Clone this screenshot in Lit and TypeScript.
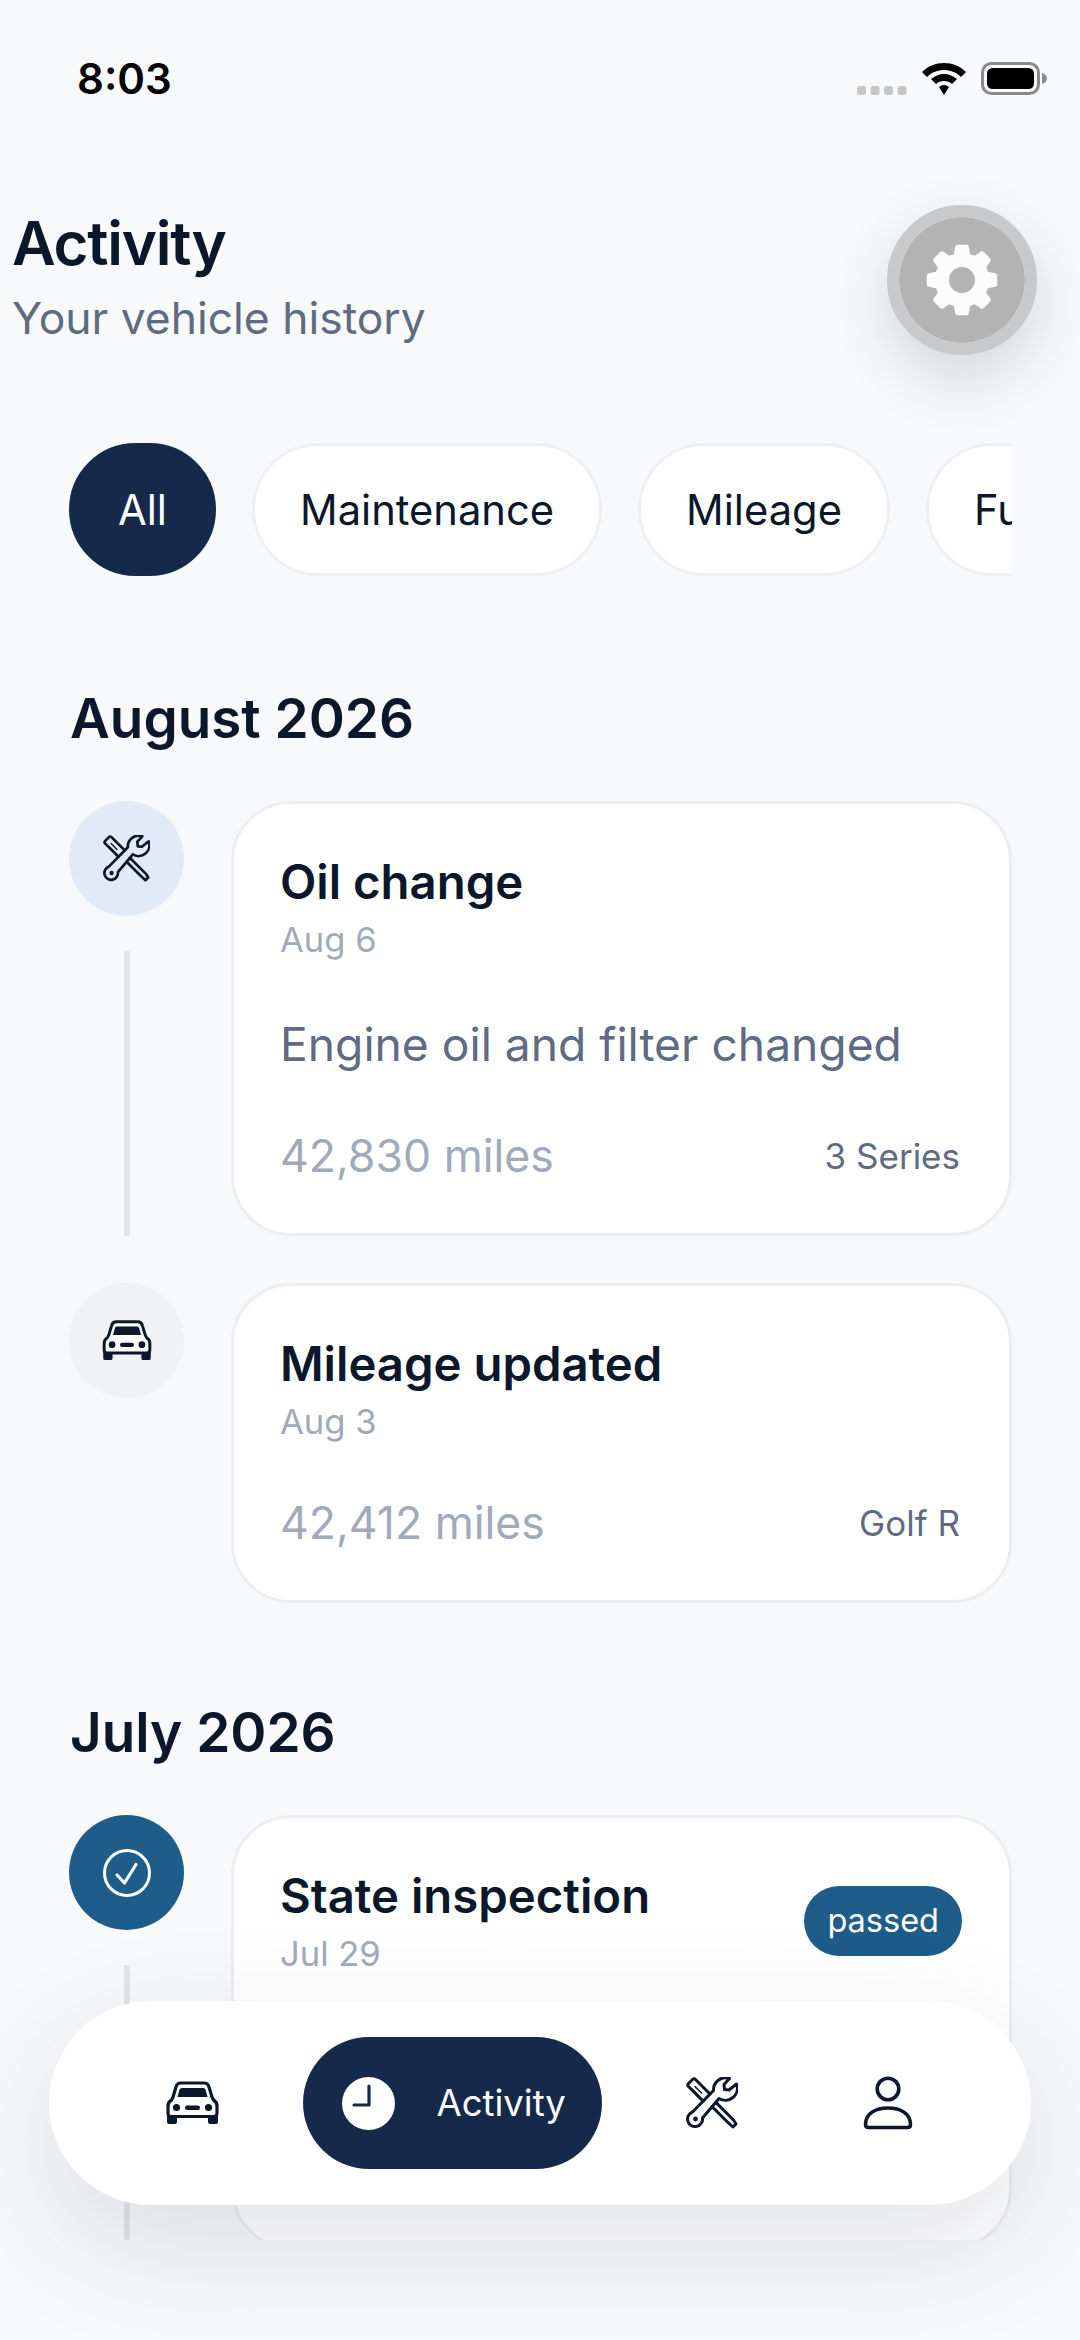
import { LitElement, html, css, svg } from 'lit';
import { customElement } from 'lit/decorators.js';

const toolsIcon = svg`
  <g fill="none" stroke="currentColor" stroke-width="3" stroke-linejoin="round" stroke-linecap="round">
    <path d="M17.1 24.1 L2.5 9.5 Q1 8 2.5 6.5 L6.5 2.5 Q8 1 9.5 2.5 L24 17"/>
    <path d="M29.9 25.4 L47.5 43 L50 47 L47 50 L42.5 46 L26.1 29.6"/>
    <path d="M43.5 1.5 L38 7.5 L38.5 12.5 L43 13 L50.5 7 A12 12 0 0 1 33 21.5 L16.5 41 A7.5 7.5 0 1 1 6.5 35 L27.5 13.5 A12 12 0 0 1 43.5 1.5 Z"/>
  </g>
  <path d="M9 9.5 L15.5 16 M6.5 12.5 L13 19" fill="none" stroke="currentColor" stroke-width="1.5" stroke-linecap="round"/>
  <circle cx="9.5" cy="42" r="2.4" fill="currentColor"/>
`;

const carIcon = svg`
  <path d="M1 34 H11 V41 Q11 43 9 43 H3 Q1 43 1 41 Z M42 34 H52 V41 Q52 43 50 43 H44 Q42 43 42 41 Z" fill="currentColor"/>
  <path d="M2 32 L2 25 Q2 21 5.5 19 L7 16 L10 6 Q11 2 15 2 L38 2 Q42 2 43 6 L46 16 L47.5 19 Q51 21 51 25 L51 32 Q51 35.5 48 35.5 L5 35.5 Q2 35.5 2 32 Z" fill="#fff" stroke="currentColor" stroke-width="3.2" stroke-linejoin="round"/>
  <path d="M11.5 16 L13.5 8.5 Q14 7 16 7 L37 7 Q39 7 39.5 8.5 L41.5 16 Z" fill="currentColor"/>
  <circle cx="10.5" cy="26.5" r="3.6" fill="currentColor"/>
  <circle cx="42.5" cy="26.5" r="3.6" fill="currentColor"/>
  <rect x="19" y="24.5" width="15" height="4.4" rx="2.2" fill="currentColor"/>
`;

// teeth come out of a loop, drawing eight of them by hand is no fun
function gearOutline(cx: number, cy: number) {
  const pts: string[] = [];
  const teeth = 8;
  for (let i = 0; i < teeth; i++) {
    const a = (i * Math.PI * 2) / teeth - Math.PI / 2;
    const step = Math.PI / teeth;
    const corners: [number, number][] = [
      [25, a - step * 0.62],
      [33, a - step * 0.34],
      [33, a + step * 0.34],
      [25, a + step * 0.62],
    ];
    for (const [r, t] of corners) {
      pts.push(`${(cx + r * Math.cos(t)).toFixed(2)} ${(cy + r * Math.sin(t)).toFixed(2)}`);
    }
  }
  return `M${pts.join(' L')} Z`;
}

interface Entry {
  title: string;
  date: string;
  desc?: string;
  miles?: string;
  car?: string;
  badge?: string;
  kind: 'service' | 'mileage' | 'check';
  line?: boolean;
  tall?: boolean;
}

const months: { name: string; entries: Entry[] }[] = [
  {
    name: 'August 2026',
    entries: [
      { title: 'Oil change', date: 'Aug 6', desc: 'Engine oil and filter changed', miles: '42,830 miles', car: '3 Series', kind: 'service', line: true },
      { title: 'Mileage updated', date: 'Aug 3', miles: '42,412 miles', car: 'Golf R', kind: 'mileage' },
    ],
  },
  {
    name: 'July 2026',
    entries: [{ title: 'State inspection', date: 'Jul 29', badge: 'passed', kind: 'check', line: true, tall: true }],
  },
];

@customElement('app-root')
export class AppRoot extends LitElement {
  static styles = css`
    :host {
      display: block;
      position: relative;
      width: 1080px;
      height: 2340px;
      overflow: hidden;
      background: #f8f9fb;
      font-family: Inter, 'Liberation Sans', sans-serif;
      color: #0b172a;
    }

    .status {
      height: 205px;
      display: flex;
      justify-content: space-between;
      box-sizing: border-box;
      padding: 59px 32px 0 77px;
    }
    .clock {
      font-size: 42px;
      font-weight: 600;
      line-height: 40px;
      color: #000;
    }
    .status-icons {
      display: flex;
      gap: 14px;
      height: 36px;
      margin-top: 3px;
    }
    .status-icons svg {
      display: block;
    }

    .header {
      height: 150px;
      display: flex;
      justify-content: space-between;
      align-items: center;
      padding: 0 43px 0 12px;
    }
    .titles {
      padding-bottom: 9px;
    }
    h1 {
      margin: 0;
      font-size: 60px;
      line-height: 72px;
      font-weight: 600;
      letter-spacing: -1.2px;
    }
    .sub {
      margin-top: 12px;
      font-size: 44.4px;
      line-height: 54px;
      color: #5e6b82;
    }
    .gear {
      width: 150px;
      height: 150px;
      box-sizing: border-box;
      border: 12px solid #c8c9cb;
      border-radius: 50%;
      background: #b3b3b3;
      background-clip: padding-box;
      box-shadow: 0 24px 60px rgba(30, 40, 60, 0.16);
      display: flex;
      align-items: center;
      justify-content: center;
    }

    .chips {
      display: flex;
      gap: 36px;
      margin: 88px 68px 0 69px;
      height: 133px;
      overflow: hidden;
    }
    .chip {
      flex: none;
      box-sizing: border-box;
      height: 133px;
      padding: 0 45px;
      border: 3px solid #eff0f3;
      border-radius: 67px;
      background: #fff;
      font-size: 41.7px;
      line-height: 129px;
      color: #0b172a;
    }
    .chip.on {
      padding: 0 46px;
      background: #152a4a;
      border-color: #152a4a;
      color: #fff;
    }

    .feed {
      margin: 110px 68px 0 69px;
      height: 1554px;
      overflow: hidden;
    }
    h2 {
      margin: 0 0 51px;
      font-size: 54.8px;
      line-height: 64px;
      font-weight: 600;
      padding-left: 1px;
    }
    .month + .month h2 {
      margin-top: 97px;
    }
    .row {
      display: flex;
      gap: 47px;
    }
    .row + .row {
      margin-top: 47px;
    }
    .rail {
      flex: none;
      width: 115px;
      display: flex;
      flex-direction: column;
      align-items: center;
    }
    .dot {
      flex: none;
      width: 115px;
      height: 115px;
      border-radius: 50%;
      display: flex;
      align-items: center;
      justify-content: center;
    }
    .dot.service {
      background: #e1ebf7;
    }
    .dot.mileage {
      background: #f1f2f5;
    }
    .dot.check {
      background: #1e5c8a;
    }
    .line {
      flex: 1;
      width: 6px;
      margin-top: 35px;
      background: #e3e5e9;
    }

    .card {
      flex: 1;
      min-width: 0;
      box-sizing: border-box;
      padding: 50px 49px 51px 46px;
      border: 3px solid #eceef1;
      border-radius: 60px;
      background: #fff;
    }
    .card.tall {
      height: 434px;
    }
    .top {
      display: flex;
      justify-content: space-between;
    }
    .title {
      font-size: 47.3px;
      line-height: 56px;
      font-weight: 600;
    }
    .date {
      margin-top: 9px;
      font-size: 34.6px;
      line-height: 40px;
      color: #a0aabb;
    }
    .badge {
      align-self: flex-start;
      margin: 18px -2px 0 0;
      padding: 0 23px;
      height: 70px;
      line-height: 70px;
      border-radius: 35px;
      background: #1e5c8a;
      color: #fff;
      font-size: 32.5px;
    }
    .desc {
      margin-top: 57px;
      font-size: 46.2px;
      line-height: 56px;
      color: #5e6b82;
    }
    .foot {
      margin-top: 56px;
      display: flex;
      justify-content: space-between;
      align-items: center;
      height: 52px;
    }
    .desc + .foot {
      margin: 58px 0 0;
    }
    .miles {
      font-size: 44.6px;
      color: #a0aabb;
    }
    .car {
      font-size: 35px;
      color: #5e6b82;
    }

    .nav {
      position: absolute;
      left: 49px;
      top: 2001px;
      width: 982px;
      height: 204px;
      border-radius: 102px;
      background: #fff;
      box-shadow: 0 40px 120px rgba(30, 40, 60, 0.13);
      display: flex;
      align-items: center;
      justify-content: center;
      gap: 44px;
    }
    .tab {
      width: 132px;
      height: 132px;
      display: flex;
      align-items: center;
      justify-content: center;
    }
    .tab.on {
      width: 299px;
      box-sizing: border-box;
      justify-content: flex-start;
      padding-left: 39px;
      gap: 42px;
      border-radius: 66px;
      background: #152a4a;
      color: #fff;
      font-size: 36.5px;
    }
  `;

  private dotIcon(kind: Entry['kind']) {
    if (kind === 'service') {
      return html`<svg width="47" height="47" viewBox="0 0 52 52" style="color:#0b172a">${toolsIcon}</svg>`;
    }
    if (kind === 'mileage') {
      return html`<svg width="50" height="41" viewBox="0 0 53 44" style="color:#0b172a">${carIcon}</svg>`;
    }
    return html`<svg width="50" height="50" viewBox="0 0 50 50">
      <circle cx="25" cy="25" r="22.5" fill="none" stroke="#fff" stroke-width="3"/>
      <path d="M15 27 L22.5 35 L34 16.5" fill="none" stroke="#fff" stroke-width="3.2" stroke-linecap="round" stroke-linejoin="round"/>
    </svg>`;
  }

  private renderEntry(e: Entry) {
    return html`
      <div class="row">
        <div class="rail">
          <div class="dot ${e.kind}">${this.dotIcon(e.kind)}</div>
          ${e.line ? html`<div class="line"></div>` : ''}
        </div>
        <div class="card ${e.tall ? 'tall' : ''}">
          <div class="top">
            <div>
              <div class="title">${e.title}</div>
              <div class="date">${e.date}</div>
            </div>
            ${e.badge ? html`<div class="badge">${e.badge}</div>` : ''}
          </div>
          ${e.desc ? html`<div class="desc">${e.desc}</div>` : ''}
          ${e.miles
            ? html`<div class="foot">
                <span class="miles">${e.miles}</span>
                <span class="car">${e.car}</span>
              </div>`
            : ''}
        </div>
      </div>
    `;
  }

  render() {
    const gear = gearOutline(40, 40);
    return html`
      <div class="status">
        <div class="clock">8:03</div>
        <div class="status-icons">
          <svg width="50" height="36" viewBox="0 0 50 36">
            ${[0, 13.5, 27, 40.5].map((x) => svg`<rect x=${x} y="24" width="9" height="9" rx="2.5" fill="#c6c6c6"/>`)}
          </svg>
          <svg width="46" height="34" viewBox="0 0 46 34">
            <path d="M23 1 C31 1 39 4 45 10 L40 15 C35 10 29 8 23 8 C17 8 11 10 6 15 L1 10 C7 4 15 1 23 1 Z" fill="#000"/>
            <path d="M23 12 C28 12 32 14 36 17 L31 22 C29 20 26 19 23 19 C20 19 17 20 15 22 L10 17 C14 14 18 12 23 12 Z" fill="#000"/>
            <path d="M23 23 C25 23 27 24 28 25 L23 33 L18 25 C19 24 21 23 23 23 Z" fill="#000"/>
          </svg>
          <svg width="67" height="34" viewBox="0 0 67 34">
            <rect x="1.5" y="1.5" width="56" height="30" rx="9" fill="none" stroke="#8a8a8a" stroke-width="3"/>
            <rect x="6" y="6" width="47" height="21" rx="5.5" fill="#000"/>
            <path d="M61 11 Q66 13 66 16.5 Q66 20 61 22 Z" fill="#8a8a8a"/>
          </svg>
        </div>
      </div>

      <div class="header">
        <div class="titles">
          <h1>Activity</h1>
          <div class="sub">Your vehicle history</div>
        </div>
        <div class="gear">
          <svg width="80" height="80" viewBox="0 0 80 80">
            <path d=${gear} fill="#fcfcfd" stroke="#fcfcfd" stroke-width="5" stroke-linejoin="round"/>
            <circle cx="40" cy="40" r="13" fill="#b3b3b3"/>
          </svg>
        </div>
      </div>

      <div class="chips">
        <div class="chip on">All</div>
        <div class="chip">Maintenance</div>
        <div class="chip">Mileage</div>
        <div class="chip">Fuel</div>
      </div>

      <div class="feed">
        ${months.map(
          (m) => html`
            <div class="month">
              <h2>${m.name}</h2>
              ${m.entries.map((e) => this.renderEntry(e))}
            </div>
          `
        )}
      </div>

      <nav class="nav">
        <div class="tab">
          <svg width="53" height="44" viewBox="0 0 53 44" style="color:#0b172a">${carIcon}</svg>
        </div>
        <div class="tab on">
          <svg width="53" height="53" viewBox="0 0 53 53">
            <circle cx="26.5" cy="26.5" r="26.5" fill="#fff"/>
            <path d="M27 9 V28 H12" fill="none" stroke="#152a4a" stroke-width="3.2" stroke-linecap="round" stroke-linejoin="round"/>
          </svg>
          <span>Activity</span>
        </div>
        <div class="tab">
          <svg width="52" height="52" viewBox="0 0 52 52" style="color:#0b172a">${toolsIcon}</svg>
        </div>
        <div class="tab">
          <svg width="50" height="54" viewBox="0 0 50 54">
            <circle cx="25" cy="13" r="10.8" fill="none" stroke="#0b172a" stroke-width="3.6"/>
            <path d="M2.5 48.5 C2.5 37 13 32 25 32 C37 32 47.5 37 47.5 48.5 Q47.5 51.5 44.5 51.5 L5.5 51.5 Q2.5 51.5 2.5 48.5 Z" fill="none" stroke="#0b172a" stroke-width="3.6" stroke-linejoin="round"/>
          </svg>
        </div>
      </nav>
    `;
  }
}
